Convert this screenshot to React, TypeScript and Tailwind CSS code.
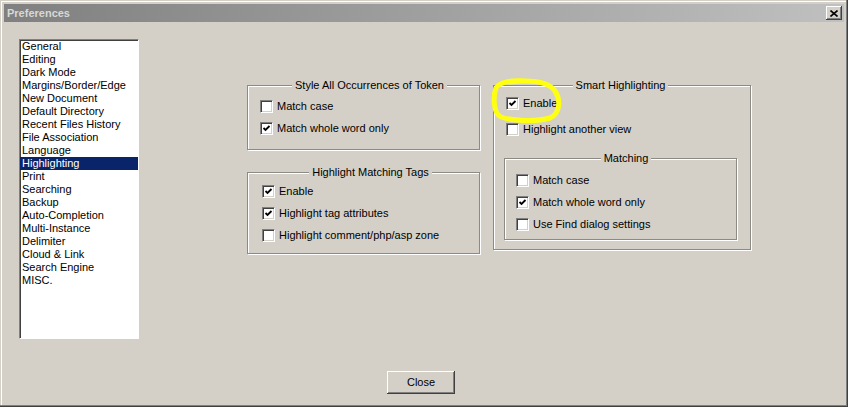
const categories = [
  "General",
  "Editing",
  "Dark Mode",
  "Margins/Border/Edge",
  "New Document",
  "Default Directory",
  "Recent Files History",
  "File Association",
  "Language",
  "Highlighting",
  "Print",
  "Searching",
  "Backup",
  "Auto-Completion",
  "Multi-Instance",
  "Delimiter",
  "Cloud & Link",
  "Search Engine",
  "MISC.",
];

function CheckBox({ checked }: { checked?: boolean }) {
  return (
    <span className="flex h-[13px] w-[13px] shrink-0 items-center justify-center border border-t-[#808080] border-l-[#808080] border-b-white border-r-white bg-white shadow-[inset_1px_1px_0_#404040,inset_-1px_-1px_0_#d4d0c8]">
      {checked && (
        <svg width="9" height="9" viewBox="0 0 9 9">
          <path d="M1.5 4 L3.5 6 L7.5 2" fill="none" stroke="#000" strokeWidth="1.8" />
        </svg>
      )}
    </span>
  );
}

function Option({ label, checked, className = "h-[22px]" }: { label: string; checked?: boolean; className?: string }) {
  return (
    <div className={`flex items-center gap-[4px] ${className}`}>
      <CheckBox checked={checked} />
      <span>{label}</span>
    </div>
  );
}

function Group({ title, className, children }: { title: string; className?: string; children: React.ReactNode }) {
  return (
    <fieldset className={`border border-[#8c8a85] shadow-[inset_1px_1px_0_#fff,1px_1px_0_#fff] ${className ?? ""}`}>
      <legend className="mx-auto bg-[#d4d0c8] px-[3px] leading-[13px]">{title}</legend>
      {children}
    </fieldset>
  );
}

export default function App() {
  return (
    <div
      className="relative flex h-[407px] w-[848px] flex-col bg-[#d4d0c8] p-[4px] text-[11px] leading-[13px] text-black shadow-[inset_-1px_-1px_0_#404040,inset_-2px_-2px_0_#808080,inset_1px_1px_0_#d4d0c8,inset_2px_2px_0_#fff]"
      style={{ fontFamily: '"Liberation Sans", Arial, sans-serif' }}
    >
      {/* title bar */}
      <div className="flex h-[18px] items-center justify-between bg-gradient-to-r from-[#808080] to-[#c0c0c0] pl-[3px] pr-[2px]">
        <span className="font-bold text-[#d8d8d8]">Preferences</span>
        <button className="flex h-[14px] w-[16px] items-center justify-center bg-[#d4d0c8] shadow-[inset_-1px_-1px_0_#404040,inset_1px_1px_0_#fff,inset_-2px_-2px_0_#808080]">
          <svg width="8" height="7" viewBox="0 0 8 7">
            <path d="M0.5 0.5 L7.5 6.5 M7.5 0.5 L0.5 6.5" stroke="#000" strokeWidth="1.6" />
          </svg>
        </button>
      </div>

      <div className="flex pl-[15px] pt-[17px]">
        {/* category list */}
        <div className="h-[300px] w-[120px] border border-t-[#808080] border-l-[#808080] border-b-white border-r-white bg-white shadow-[inset_1px_1px_0_#404040]">
          {categories.map((c) => (
            <div
              key={c}
              className={`h-[13px] pl-[2px] ${c === "Highlighting" ? "bg-[#0a246a] text-white" : ""}`}
            >
              {c}
            </div>
          ))}
        </div>

        <div className="ml-[108px] mt-[40px] flex items-start gap-[13px]">
          <div className="flex w-[233px] flex-col">
            <Group title="Style All Occurrences of Token" className="pb-[10px] pl-[12px] pt-[3px]">
              <Option label="Match case" />
              <Option label="Match whole word only" checked />
            </Group>
            <Group title="Highlight Matching Tags" className="mt-[16px] pb-[7px] pl-[14px] pt-[1px]">
              <Option label="Enable" checked />
              <Option label="Highlight tag attributes" checked />
              <Option label="Highlight comment/php/asp zone" />
            </Group>
          </div>

          <Group title="Smart Highlighting" className="w-[258px] pb-[9px] pl-[10px] pr-[13px]">
            <div className="pl-[2px]">
              <Option label="Enable" checked />
              <Option label="Highlight another view" className="mt-[4px] h-[22px]" />
            </div>
            <Group title="Matching" className="mt-[12px] pb-[4px] pl-[11px] pt-[4px]">
              <Option label="Match case" />
              <Option label="Match whole word only" checked />
              <Option label="Use Find dialog settings" />
            </Group>
          </Group>
        </div>
      </div>

      <div className="mt-[32px] flex pl-[383px]">
        <button className="h-[23px] w-[68px] bg-[#d4d0c8] shadow-[inset_-1px_-1px_0_#404040,inset_1px_1px_0_#fff,inset_-2px_-2px_0_#808080]">
          Close
        </button>
      </div>

      {/* yellow marker loop drawn over the Enable option */}
      <svg className="pointer-events-none absolute left-[488px] top-[74px]" width="80" height="54" viewBox="0 0 80 54">
        <path
          d="M22 8 C40 6 60 7 67 17 C73 26 72 40 62 44 C48 48 24 47 13 43 C5 39 5 22 8 14 C11 8 24 6 36 7"
          fill="none"
          stroke="#ffff10"
          strokeWidth="5"
          strokeLinecap="round"
        />
      </svg>
    </div>
  );
}
